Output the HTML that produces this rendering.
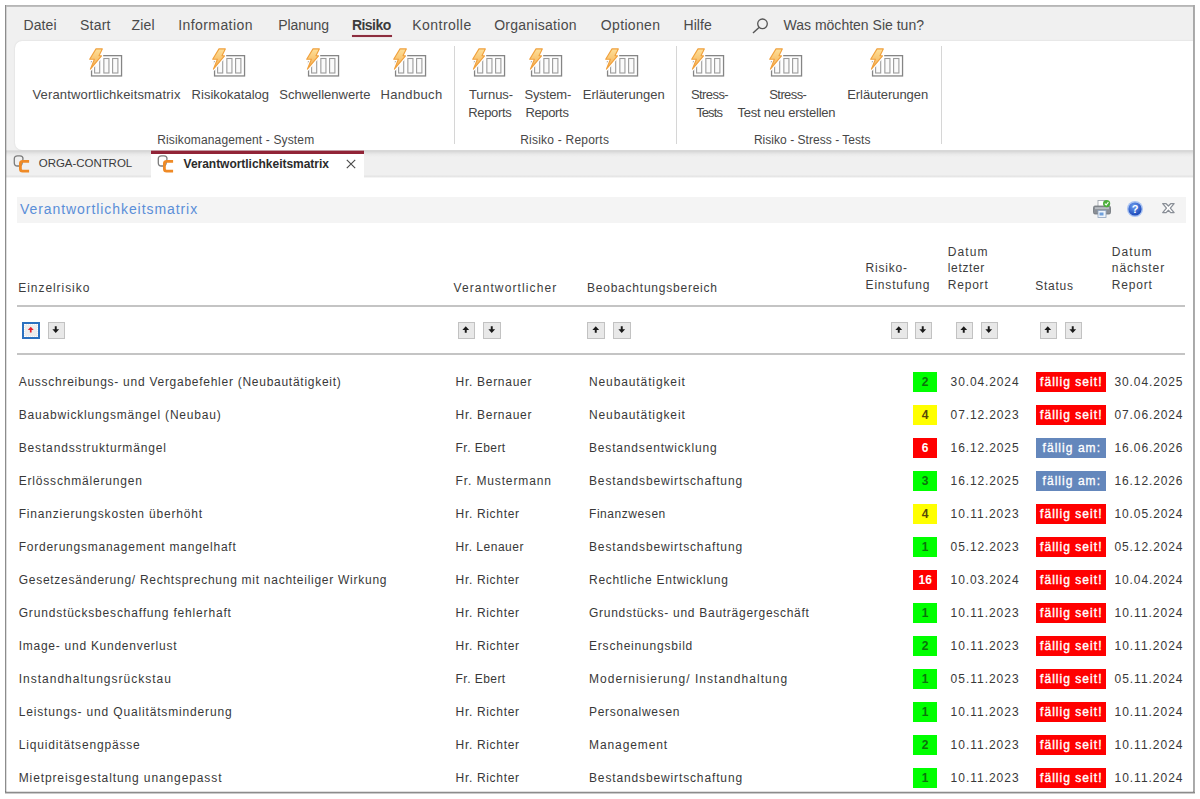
<!DOCTYPE html>
<html lang="de">
<head>
<meta charset="utf-8">
<title>Verantwortlichkeitsmatrix</title>
<style>
*{box-sizing:border-box;margin:0;padding:0}
html,body{width:1200px;height:799px;overflow:hidden;background:#fff}
body{font-family:"Liberation Sans",sans-serif;color:#3a3a3a;position:relative}
.abs{position:absolute;white-space:nowrap}
#frame{position:absolute;left:5px;top:5px;width:1190px;height:789px;background:#fff;overflow:hidden}
#win{position:absolute;left:-5px;top:-5px;width:1200px;height:799px}
.fb{position:absolute}
/* menu */
#menubar{position:absolute;left:0;top:0;width:1200px;height:151px;background:#f0f0f0}
.mi{position:absolute;top:16px;font-size:14px;line-height:18px;color:#4a4a4a;white-space:nowrap}
/* ribbon */
#ribbon{position:absolute;left:15px;top:40.5px;width:1200px;height:109.5px;background:#fff;border-radius:7px 0 0 7px;box-shadow:0 0 2px rgba(0,0,0,.12)}
.rl{position:absolute;font-size:13px;line-height:18px;color:#474747;white-space:nowrap}
.gl{position:absolute;top:132px;font-size:12px;line-height:16px;color:#474747;white-space:nowrap}
.sep{position:absolute;top:46px;width:1px;height:98px;background:#d6d6d6}
.ico{position:absolute;top:47px;width:36px;height:31px}
/* tabs */
#tabstrip{position:absolute;left:0;top:150px;width:1200px;height:27.5px;background:linear-gradient(to bottom,#e2e2e2 0,#d9d9d9 1.5px,#e2e2e2 3px,#eaeaea 4.5px,#f0f0f0 7px,#f0f0f0 24.8px,#e3e3e3 26.3px,#f4f4f4 27.5px)}
#tab2{position:absolute;left:151px;top:151px;width:213px;height:27px;background:#fff;border-top:3px solid #912437;box-shadow:0 -1px 0 rgba(160,60,80,.4)}
.tt{position:absolute;font-size:11.5px;line-height:16px;white-space:nowrap;color:#3b3b3b}
/* content */
#titlebar{position:absolute;left:17px;top:196.6px;width:1169px;height:26.2px;background:#f4f4f4}
#title{position:absolute;left:20px;top:200px;font-size:14px;line-height:18px;color:#5a8ed8;letter-spacing:.93px;white-space:nowrap}
.hr{position:absolute;left:16.5px;width:1168.5px;height:2px;background:#c4c4c4}
.th{position:absolute;font-size:12px;line-height:16.5px;letter-spacing:.75px;color:#3c3c3c;white-space:nowrap}
.sb{position:absolute;top:322px;width:17.7px;height:17.4px;background:#e8e8e8;border:1px solid #c2c2c2}
.sb svg{position:absolute;left:-.4px;top:-.6px}
.sb.act{border:2px solid #2b72c0;background:#ececec}
.td{position:absolute;font-size:12px;line-height:16px;letter-spacing:.75px;color:#383838;white-space:nowrap}
.bd{position:absolute;left:913px;width:24.4px;height:20px;font-size:12px;line-height:20px;text-align:center;font-weight:bold}
.st{position:absolute;left:1036.3px;width:70px;height:20px;font-size:12px;line-height:20px;text-align:center;color:#fff;white-space:nowrap}
</style>
</head>
<body>
<div id="frame"><div id="win">
<div id="menubar"></div>
<div class="mi" style="left:23.5px;letter-spacing:0.078px;">Datei</div>
<div class="mi" style="left:80.0px;letter-spacing:0.23px;">Start</div>
<div class="mi" style="left:131.5px;letter-spacing:0.146px;">Ziel</div>
<div class="mi" style="left:178.2px;letter-spacing:0.425px;">Information</div>
<div class="mi" style="left:278.2px;letter-spacing:-0.098px;">Planung</div>
<div class="mi" style="left:352.0px;letter-spacing:-0.563px;font-weight:bold;color:#3c3c3c;">Risiko</div>
<div class="mi" style="left:412.3px;letter-spacing:0.454px;">Kontrolle</div>
<div class="mi" style="left:494.2px;letter-spacing:0.264px;">Organisation</div>
<div class="mi" style="left:600.8px;letter-spacing:0.339px;">Optionen</div>
<div class="mi" style="left:683.5px;letter-spacing:0.046px;">Hilfe</div>
<div class="mi" style="left:783.5px;letter-spacing:0.009px;">Was möchten Sie tun?</div>
<div class="abs" style="left:352px;top:35px;width:40px;height:2px;background:#8c2d3e;box-shadow:0 0 1px rgba(220,120,130,.8)"></div>
<svg class="abs" style="left:751px;top:17px" width="19" height="17" viewBox="0 0 19 17"><circle cx="11.5" cy="6.8" r="4.8" fill="none" stroke="#555" stroke-width="1.3"/><path d="M8 10.4 L2 16" stroke="#555" stroke-width="1.4" fill="none"/></svg>
<div id="tabstrip"></div>
<div id="ribbon"></div>
<svg width="0" height="0" style="position:absolute"><defs><linearGradient id="bg" x1="0" y1="0" x2="0" y2="1"><stop offset="0" stop-color="#fde09a"/><stop offset="1" stop-color="#f5ab4c"/></linearGradient></defs></svg>
<svg class="ico" style="left:87.5px" width="36" height="31" viewBox="0 0 36 31"><rect x="3.55" y="8.65" width="30" height="20.3" fill="#fff" stroke="#858585" stroke-width="1.3"/><rect x="6.6" y="11.5" width="5.1" height="14.5" fill="#fbfbfb" stroke="#9c9c9c" stroke-width="1.1"/><rect x="15.85" y="11.5" width="5.1" height="14.5" fill="#fbfbfb" stroke="#9c9c9c" stroke-width="1.1"/><rect x="24.6" y="11.5" width="5.3" height="14.5" fill="#fbfbfb" stroke="#9c9c9c" stroke-width="1.1"/><path d="M8 1.9 L14.3 1.9 L11 8.8 L13.5 8.9 L2.4 22.2 L6.4 12.3 L1.7 12.3 Z" fill="#fff" stroke="#fff" stroke-width="3.6" stroke-linejoin="round"/><path d="M8 1.9 L14.3 1.9 L11 8.8 L13.5 8.9 L2.4 22.2 L6.4 12.3 L1.7 12.3 Z" fill="url(#bg)" stroke="#f0a03c" stroke-width="1.1" stroke-linejoin="round"/></svg>
<svg class="ico" style="left:210.6px" width="36" height="31" viewBox="0 0 36 31"><rect x="3.55" y="8.65" width="30" height="20.3" fill="#fff" stroke="#858585" stroke-width="1.3"/><rect x="6.6" y="11.5" width="5.1" height="14.5" fill="#fbfbfb" stroke="#9c9c9c" stroke-width="1.1"/><rect x="15.85" y="11.5" width="5.1" height="14.5" fill="#fbfbfb" stroke="#9c9c9c" stroke-width="1.1"/><rect x="24.6" y="11.5" width="5.3" height="14.5" fill="#fbfbfb" stroke="#9c9c9c" stroke-width="1.1"/><path d="M8 1.9 L14.3 1.9 L11 8.8 L13.5 8.9 L2.4 22.2 L6.4 12.3 L1.7 12.3 Z" fill="#fff" stroke="#fff" stroke-width="3.6" stroke-linejoin="round"/><path d="M8 1.9 L14.3 1.9 L11 8.8 L13.5 8.9 L2.4 22.2 L6.4 12.3 L1.7 12.3 Z" fill="url(#bg)" stroke="#f0a03c" stroke-width="1.1" stroke-linejoin="round"/></svg>
<svg class="ico" style="left:305.2px" width="36" height="31" viewBox="0 0 36 31"><rect x="3.55" y="8.65" width="30" height="20.3" fill="#fff" stroke="#858585" stroke-width="1.3"/><rect x="6.6" y="11.5" width="5.1" height="14.5" fill="#fbfbfb" stroke="#9c9c9c" stroke-width="1.1"/><rect x="15.85" y="11.5" width="5.1" height="14.5" fill="#fbfbfb" stroke="#9c9c9c" stroke-width="1.1"/><rect x="24.6" y="11.5" width="5.3" height="14.5" fill="#fbfbfb" stroke="#9c9c9c" stroke-width="1.1"/><path d="M8 1.9 L14.3 1.9 L11 8.8 L13.5 8.9 L2.4 22.2 L6.4 12.3 L1.7 12.3 Z" fill="#fff" stroke="#fff" stroke-width="3.6" stroke-linejoin="round"/><path d="M8 1.9 L14.3 1.9 L11 8.8 L13.5 8.9 L2.4 22.2 L6.4 12.3 L1.7 12.3 Z" fill="url(#bg)" stroke="#f0a03c" stroke-width="1.1" stroke-linejoin="round"/></svg>
<svg class="ico" style="left:391.8px" width="36" height="31" viewBox="0 0 36 31"><rect x="3.55" y="8.65" width="30" height="20.3" fill="#fff" stroke="#858585" stroke-width="1.3"/><rect x="6.6" y="11.5" width="5.1" height="14.5" fill="#fbfbfb" stroke="#9c9c9c" stroke-width="1.1"/><rect x="15.85" y="11.5" width="5.1" height="14.5" fill="#fbfbfb" stroke="#9c9c9c" stroke-width="1.1"/><rect x="24.6" y="11.5" width="5.3" height="14.5" fill="#fbfbfb" stroke="#9c9c9c" stroke-width="1.1"/><path d="M8 1.9 L14.3 1.9 L11 8.8 L13.5 8.9 L2.4 22.2 L6.4 12.3 L1.7 12.3 Z" fill="#fff" stroke="#fff" stroke-width="3.6" stroke-linejoin="round"/><path d="M8 1.9 L14.3 1.9 L11 8.8 L13.5 8.9 L2.4 22.2 L6.4 12.3 L1.7 12.3 Z" fill="url(#bg)" stroke="#f0a03c" stroke-width="1.1" stroke-linejoin="round"/></svg>
<svg class="ico" style="left:471px" width="36" height="31" viewBox="0 0 36 31"><rect x="3.55" y="8.65" width="30" height="20.3" fill="#fff" stroke="#858585" stroke-width="1.3"/><rect x="6.6" y="11.5" width="5.1" height="14.5" fill="#fbfbfb" stroke="#9c9c9c" stroke-width="1.1"/><rect x="15.85" y="11.5" width="5.1" height="14.5" fill="#fbfbfb" stroke="#9c9c9c" stroke-width="1.1"/><rect x="24.6" y="11.5" width="5.3" height="14.5" fill="#fbfbfb" stroke="#9c9c9c" stroke-width="1.1"/><path d="M8 1.9 L14.3 1.9 L11 8.8 L13.5 8.9 L2.4 22.2 L6.4 12.3 L1.7 12.3 Z" fill="#fff" stroke="#fff" stroke-width="3.6" stroke-linejoin="round"/><path d="M8 1.9 L14.3 1.9 L11 8.8 L13.5 8.9 L2.4 22.2 L6.4 12.3 L1.7 12.3 Z" fill="url(#bg)" stroke="#f0a03c" stroke-width="1.1" stroke-linejoin="round"/></svg>
<svg class="ico" style="left:528.3px" width="36" height="31" viewBox="0 0 36 31"><rect x="3.55" y="8.65" width="30" height="20.3" fill="#fff" stroke="#858585" stroke-width="1.3"/><rect x="6.6" y="11.5" width="5.1" height="14.5" fill="#fbfbfb" stroke="#9c9c9c" stroke-width="1.1"/><rect x="15.85" y="11.5" width="5.1" height="14.5" fill="#fbfbfb" stroke="#9c9c9c" stroke-width="1.1"/><rect x="24.6" y="11.5" width="5.3" height="14.5" fill="#fbfbfb" stroke="#9c9c9c" stroke-width="1.1"/><path d="M8 1.9 L14.3 1.9 L11 8.8 L13.5 8.9 L2.4 22.2 L6.4 12.3 L1.7 12.3 Z" fill="#fff" stroke="#fff" stroke-width="3.6" stroke-linejoin="round"/><path d="M8 1.9 L14.3 1.9 L11 8.8 L13.5 8.9 L2.4 22.2 L6.4 12.3 L1.7 12.3 Z" fill="url(#bg)" stroke="#f0a03c" stroke-width="1.1" stroke-linejoin="round"/></svg>
<svg class="ico" style="left:604px" width="36" height="31" viewBox="0 0 36 31"><rect x="3.55" y="8.65" width="30" height="20.3" fill="#fff" stroke="#858585" stroke-width="1.3"/><rect x="6.6" y="11.5" width="5.1" height="14.5" fill="#fbfbfb" stroke="#9c9c9c" stroke-width="1.1"/><rect x="15.85" y="11.5" width="5.1" height="14.5" fill="#fbfbfb" stroke="#9c9c9c" stroke-width="1.1"/><rect x="24.6" y="11.5" width="5.3" height="14.5" fill="#fbfbfb" stroke="#9c9c9c" stroke-width="1.1"/><path d="M8 1.9 L14.3 1.9 L11 8.8 L13.5 8.9 L2.4 22.2 L6.4 12.3 L1.7 12.3 Z" fill="#fff" stroke="#fff" stroke-width="3.6" stroke-linejoin="round"/><path d="M8 1.9 L14.3 1.9 L11 8.8 L13.5 8.9 L2.4 22.2 L6.4 12.3 L1.7 12.3 Z" fill="url(#bg)" stroke="#f0a03c" stroke-width="1.1" stroke-linejoin="round"/></svg>
<svg class="ico" style="left:690px" width="36" height="31" viewBox="0 0 36 31"><rect x="3.55" y="8.65" width="30" height="20.3" fill="#fff" stroke="#858585" stroke-width="1.3"/><rect x="6.6" y="11.5" width="5.1" height="14.5" fill="#fbfbfb" stroke="#9c9c9c" stroke-width="1.1"/><rect x="15.85" y="11.5" width="5.1" height="14.5" fill="#fbfbfb" stroke="#9c9c9c" stroke-width="1.1"/><rect x="24.6" y="11.5" width="5.3" height="14.5" fill="#fbfbfb" stroke="#9c9c9c" stroke-width="1.1"/><path d="M8 1.9 L14.3 1.9 L11 8.8 L13.5 8.9 L2.4 22.2 L6.4 12.3 L1.7 12.3 Z" fill="#fff" stroke="#fff" stroke-width="3.6" stroke-linejoin="round"/><path d="M8 1.9 L14.3 1.9 L11 8.8 L13.5 8.9 L2.4 22.2 L6.4 12.3 L1.7 12.3 Z" fill="url(#bg)" stroke="#f0a03c" stroke-width="1.1" stroke-linejoin="round"/></svg>
<svg class="ico" style="left:768px" width="36" height="31" viewBox="0 0 36 31"><rect x="3.55" y="8.65" width="30" height="20.3" fill="#fff" stroke="#858585" stroke-width="1.3"/><rect x="6.6" y="11.5" width="5.1" height="14.5" fill="#fbfbfb" stroke="#9c9c9c" stroke-width="1.1"/><rect x="15.85" y="11.5" width="5.1" height="14.5" fill="#fbfbfb" stroke="#9c9c9c" stroke-width="1.1"/><rect x="24.6" y="11.5" width="5.3" height="14.5" fill="#fbfbfb" stroke="#9c9c9c" stroke-width="1.1"/><path d="M8 1.9 L14.3 1.9 L11 8.8 L13.5 8.9 L2.4 22.2 L6.4 12.3 L1.7 12.3 Z" fill="#fff" stroke="#fff" stroke-width="3.6" stroke-linejoin="round"/><path d="M8 1.9 L14.3 1.9 L11 8.8 L13.5 8.9 L2.4 22.2 L6.4 12.3 L1.7 12.3 Z" fill="url(#bg)" stroke="#f0a03c" stroke-width="1.1" stroke-linejoin="round"/></svg>
<svg class="ico" style="left:868.5px" width="36" height="31" viewBox="0 0 36 31"><rect x="3.55" y="8.65" width="30" height="20.3" fill="#fff" stroke="#858585" stroke-width="1.3"/><rect x="6.6" y="11.5" width="5.1" height="14.5" fill="#fbfbfb" stroke="#9c9c9c" stroke-width="1.1"/><rect x="15.85" y="11.5" width="5.1" height="14.5" fill="#fbfbfb" stroke="#9c9c9c" stroke-width="1.1"/><rect x="24.6" y="11.5" width="5.3" height="14.5" fill="#fbfbfb" stroke="#9c9c9c" stroke-width="1.1"/><path d="M8 1.9 L14.3 1.9 L11 8.8 L13.5 8.9 L2.4 22.2 L6.4 12.3 L1.7 12.3 Z" fill="#fff" stroke="#fff" stroke-width="3.6" stroke-linejoin="round"/><path d="M8 1.9 L14.3 1.9 L11 8.8 L13.5 8.9 L2.4 22.2 L6.4 12.3 L1.7 12.3 Z" fill="url(#bg)" stroke="#f0a03c" stroke-width="1.1" stroke-linejoin="round"/></svg>
<div class="rl" style="left:32.4px;top:86.4px;letter-spacing:0.176px">Verantwortlichkeitsmatrix</div>
<div class="rl" style="left:191.6px;top:86.4px;letter-spacing:0.014px">Risikokatalog</div>
<div class="rl" style="left:279.3px;top:86.4px;letter-spacing:0.004px">Schwellenwerte</div>
<div class="rl" style="left:380.4px;top:86.4px;letter-spacing:0.36px">Handbuch</div>
<div class="rl" style="left:468.9px;top:86.4px;letter-spacing:-0.002px">Turnus-</div>
<div class="rl" style="left:468.2px;top:104.4px;letter-spacing:-0.339px">Reports</div>
<div class="rl" style="left:524.4px;top:86.4px;letter-spacing:-0.112px">System-</div>
<div class="rl" style="left:525.4px;top:104.4px;letter-spacing:-0.339px">Reports</div>
<div class="rl" style="left:582.8px;top:86.4px;letter-spacing:0.019px">Erläuterungen</div>
<div class="rl" style="left:690.9px;top:86.4px;letter-spacing:-0.562px">Stress-</div>
<div class="rl" style="left:696.2px;top:104.4px;letter-spacing:-0.911px">Tests</div>
<div class="rl" style="left:769.3px;top:86.4px;letter-spacing:-0.595px">Stress-</div>
<div class="rl" style="left:737.4px;top:104.4px;letter-spacing:-0.218px">Test neu erstellen</div>
<div class="rl" style="left:847.2px;top:86.4px;letter-spacing:-0.056px">Erläuterungen</div>
<div class="gl" style="left:157.2px;letter-spacing:0.15px">Risikomanagement - System</div>
<div class="gl" style="left:520.2px;letter-spacing:0.223px">Risiko - Reports</div>
<div class="gl" style="left:753.9px;letter-spacing:0.036px">Risiko - Stress - Tests</div>
<div class="sep" style="left:453.5px"></div>
<div class="sep" style="left:675.8px"></div>
<div class="sep" style="left:940.5px"></div>
<div id="tab2"></div>
<svg class="abs" style="left:13.25px;top:154px" width="18" height="20" viewBox="0 0 18 20"><path d="M4.6 1.8 L7 1.8 Q10 1.8 10 4.8 L9.2 9 Q8.8 12 6.4 12 L4.4 12 Q1.3 12 1.3 9 L1.3 4.8 Q1.3 1.8 4.6 1.8 Z" fill="none" stroke="#7c7c7c" stroke-width="1.3"/><path d="M16.1 7.4 L9.6 7.4 Q7.4 7.4 7.4 9.6 L7.4 15 Q7.4 17.2 9.6 17.2 L16.1 17.2" fill="none" stroke="#ef8a26" stroke-width="2.8"/></svg>
<svg class="abs" style="left:157px;top:154px" width="18" height="20" viewBox="0 0 18 20"><path d="M4.6 1.8 L7 1.8 Q10 1.8 10 4.8 L9.2 9 Q8.8 12 6.4 12 L4.4 12 Q1.3 12 1.3 9 L1.3 4.8 Q1.3 1.8 4.6 1.8 Z" fill="none" stroke="#7c7c7c" stroke-width="1.3"/><path d="M16.1 7.4 L9.6 7.4 Q7.4 7.4 7.4 9.6 L7.4 15 Q7.4 17.2 9.6 17.2 L16.1 17.2" fill="none" stroke="#ef8a26" stroke-width="2.8"/></svg>
<div class="tt" style="left:38.8px;top:154.8px;letter-spacing:-.05px">ORGA-CONTROL</div>
<div class="tt" style="left:183.6px;top:156.3px;font-weight:bold;color:#2b2b2b;font-size:12px;letter-spacing:-.03px">Verantwortlichkeitsmatrix</div>
<svg class="abs" style="left:345.5px;top:159px" width="10" height="10" viewBox="0 0 10 10"><path d="M0.8 0.8 L9.2 9.2 M9.2 0.8 L0.8 9.2" stroke="#4a4a4a" stroke-width="1.15" fill="none"/></svg>
<div id="titlebar"></div>
<div id="title">Verantwortlichkeitsmatrix</div>
<svg class="abs" style="left:1092px;top:199px" width="20" height="20" viewBox="0 0 20 20"><rect x="6" y="1.5" width="8" height="7" fill="#fff" stroke="#9aa0a8" stroke-width=".8"/><rect x="1.5" y="7" width="17" height="8" rx="1.5" fill="#8a8f96" stroke="#6e737a" stroke-width=".8"/><rect x="3" y="8.2" width="14" height="2" fill="#b9bdc3"/><rect x="6" y="11.5" width="8" height="7" fill="#eef4fb" stroke="#8ea4bf" stroke-width=".8"/><rect x="7.5" y="13.5" width="4" height="3" fill="#6fa0dc"/><circle cx="14.6" cy="4.6" r="3.6" fill="#4caf3a"/><path d="M12.8 4.6 L14.2 6 L16.4 3.2" stroke="#fff" stroke-width="1.1" fill="none"/></svg>
<svg class="abs" style="left:1126.2px;top:199.5px" width="18" height="18" viewBox="0 0 18 18"><defs><radialGradient id="hg" cx="40%" cy="30%" r="70%"><stop offset="0" stop-color="#6d9df0"/><stop offset="1" stop-color="#1b48b8"/></radialGradient></defs><circle cx="9" cy="9" r="8" fill="#a9c3f2"/><circle cx="9" cy="9" r="6.6" fill="url(#hg)"/><text x="9" y="13" text-anchor="middle" font-family="Liberation Sans" font-weight="bold" font-size="11" fill="#fff">?</text></svg>
<svg class="abs" style="left:1162px;top:203px" width="13" height="11" viewBox="0 0 13 11"><path d="M0.7 0.7 L4.1 0.7 L6.4 3 L8.7 0.7 L12.1 0.7 L8.3 5.1 L12.1 9.6 L8.7 9.6 L6.4 7.3 L4.1 9.6 L0.7 9.6 L4.5 5.1 Z" fill="#fff" stroke="#8a8f97" stroke-width="1.3" stroke-linejoin="round"/></svg>
<div class="hr" style="top:305px"></div>
<div class="hr" style="top:353px"></div>
<div class="th" style="left:18.30px;top:279.90px;letter-spacing:0.938px;">Einzelrisiko</div>
<div class="th" style="left:453.50px;top:279.90px;letter-spacing:1.11px;">Verantwortlicher</div>
<div class="th" style="left:587.00px;top:279.90px;letter-spacing:0.773px;">Beobachtungsbereich</div>
<div class="th" style="left:865.60px;top:260.00px;letter-spacing:0.788px;">Risiko-</div>
<div class="th" style="left:865.60px;top:276.50px;letter-spacing:0.798px;">Einstufung</div>
<div class="th" style="left:947.75px;top:243.50px;letter-spacing:1.114px;">Datum</div>
<div class="th" style="left:947.75px;top:260.00px;letter-spacing:0.652px;">letzter</div>
<div class="th" style="left:947.75px;top:276.50px;letter-spacing:0.794px;">Report</div>
<div class="th" style="left:1035.30px;top:277.90px;letter-spacing:0.734px;">Status</div>
<div class="th" style="left:1111.80px;top:243.50px;letter-spacing:1.089px;">Datum</div>
<div class="th" style="left:1111.80px;top:260.00px;letter-spacing:0.91px;">nächster</div>
<div class="th" style="left:1111.80px;top:276.50px;letter-spacing:0.794px;">Report</div>
<div class="sb act" style="left:22px"><div style="position:absolute;left:0;top:0;right:0;bottom:0;border:1px dotted #fff"></div><svg width="13.5" height="13.5" viewBox="0 0 16 16"><path d="M8 4.3 L11.5 8.3 L9 8.3 L9 11.2 L7 11.2 L7 8.3 L4.5 8.3 Z" fill="#e8202a"/></svg></div>
<div class="sb" style="left:47.7px"><svg width="15.5" height="15.5" viewBox="0 0 16 16"><path d="M8 11.4 L11.5 7.4 L9 7.4 L9 4.5 L7 4.5 L7 7.4 L4.5 7.4 Z" fill="#1a1a1a"/></svg></div>
<div class="sb" style="left:457.6px"><svg width="15.5" height="15.5" viewBox="0 0 16 16"><path d="M8 4.3 L11.5 8.3 L9 8.3 L9 11.2 L7 11.2 L7 8.3 L4.5 8.3 Z" fill="#1a1a1a"/></svg></div>
<div class="sb" style="left:483.3px"><svg width="15.5" height="15.5" viewBox="0 0 16 16"><path d="M8 11.4 L11.5 7.4 L9 7.4 L9 4.5 L7 4.5 L7 7.4 L4.5 7.4 Z" fill="#1a1a1a"/></svg></div>
<div class="sb" style="left:587.4px"><svg width="15.5" height="15.5" viewBox="0 0 16 16"><path d="M8 4.3 L11.5 8.3 L9 8.3 L9 11.2 L7 11.2 L7 8.3 L4.5 8.3 Z" fill="#1a1a1a"/></svg></div>
<div class="sb" style="left:612.9px"><svg width="15.5" height="15.5" viewBox="0 0 16 16"><path d="M8 11.4 L11.5 7.4 L9 7.4 L9 4.5 L7 4.5 L7 7.4 L4.5 7.4 Z" fill="#1a1a1a"/></svg></div>
<div class="sb" style="left:890.8px"><svg width="15.5" height="15.5" viewBox="0 0 16 16"><path d="M8 4.3 L11.5 8.3 L9 8.3 L9 11.2 L7 11.2 L7 8.3 L4.5 8.3 Z" fill="#1a1a1a"/></svg></div>
<div class="sb" style="left:914.8px"><svg width="15.5" height="15.5" viewBox="0 0 16 16"><path d="M8 11.4 L11.5 7.4 L9 7.4 L9 4.5 L7 4.5 L7 7.4 L4.5 7.4 Z" fill="#1a1a1a"/></svg></div>
<div class="sb" style="left:955.6px"><svg width="15.5" height="15.5" viewBox="0 0 16 16"><path d="M8 4.3 L11.5 8.3 L9 8.3 L9 11.2 L7 11.2 L7 8.3 L4.5 8.3 Z" fill="#1a1a1a"/></svg></div>
<div class="sb" style="left:980.8px"><svg width="15.5" height="15.5" viewBox="0 0 16 16"><path d="M8 11.4 L11.5 7.4 L9 7.4 L9 4.5 L7 4.5 L7 7.4 L4.5 7.4 Z" fill="#1a1a1a"/></svg></div>
<div class="sb" style="left:1039.6px"><svg width="15.5" height="15.5" viewBox="0 0 16 16"><path d="M8 4.3 L11.5 8.3 L9 8.3 L9 11.2 L7 11.2 L7 8.3 L4.5 8.3 Z" fill="#1a1a1a"/></svg></div>
<div class="sb" style="left:1064.6px"><svg width="15.5" height="15.5" viewBox="0 0 16 16"><path d="M8 11.4 L11.5 7.4 L9 7.4 L9 4.5 L7 4.5 L7 7.4 L4.5 7.4 Z" fill="#1a1a1a"/></svg></div>
<div class="td" style="left:18.7px;top:373.8px;letter-spacing:0.732px">Ausschreibungs- und Vergabefehler (Neubautätigkeit)</div>
<div class="td" style="left:455.6px;top:373.8px;letter-spacing:0.705px">Hr. Bernauer</div>
<div class="td" style="left:589.0px;top:373.8px;letter-spacing:0.886px">Neubautätigkeit</div>
<div class="bd" style="top:372px;background:#00ff00;color:#0c720c">2</div>
<div class="td" style="left:950.6px;top:373.8px;letter-spacing:0.882px">30.04.2024</div>
<div class="st" style="top:372px;background:#ff0000;-webkit-text-stroke:.4px #fff;letter-spacing:1.034px">fällig seit!</div>
<div class="td" style="left:1114.5px;top:373.8px;letter-spacing:0.882px">30.04.2025</div>
<div class="td" style="left:18.7px;top:406.8px;letter-spacing:0.809px">Bauabwicklungsmängel (Neubau)</div>
<div class="td" style="left:455.6px;top:406.8px;letter-spacing:0.705px">Hr. Bernauer</div>
<div class="td" style="left:589.0px;top:406.8px;letter-spacing:0.886px">Neubautätigkeit</div>
<div class="bd" style="top:405px;background:#ffff00;color:#574909">4</div>
<div class="td" style="left:950.6px;top:406.8px;letter-spacing:0.882px">07.12.2023</div>
<div class="st" style="top:405px;background:#ff0000;-webkit-text-stroke:.4px #fff;letter-spacing:1.034px">fällig seit!</div>
<div class="td" style="left:1114.5px;top:406.8px;letter-spacing:0.882px">07.06.2024</div>
<div class="td" style="left:18.7px;top:439.8px;letter-spacing:0.852px">Bestandsstrukturmängel</div>
<div class="td" style="left:455.6px;top:439.8px;letter-spacing:0.448px">Fr. Ebert</div>
<div class="td" style="left:589.0px;top:439.8px;letter-spacing:0.826px">Bestandsentwicklung</div>
<div class="bd" style="top:438px;background:#ff0000;color:#ffffff">6</div>
<div class="td" style="left:950.6px;top:439.8px;letter-spacing:0.882px">16.12.2025</div>
<div class="st" style="top:438px;background:#6487bc;-webkit-text-stroke:.3px #fff;padding-left:1px;letter-spacing:1.041px">fällig am:</div>
<div class="td" style="left:1114.5px;top:439.8px;letter-spacing:0.882px">16.06.2026</div>
<div class="td" style="left:18.7px;top:472.8px;letter-spacing:0.818px">Erlösschmälerungen</div>
<div class="td" style="left:455.6px;top:472.8px;letter-spacing:0.867px">Fr. Mustermann</div>
<div class="td" style="left:589.0px;top:472.8px;letter-spacing:0.864px">Bestandsbewirtschaftung</div>
<div class="bd" style="top:471px;background:#00ff00;color:#0c720c">3</div>
<div class="td" style="left:950.6px;top:472.8px;letter-spacing:0.882px">16.12.2025</div>
<div class="st" style="top:471px;background:#6487bc;-webkit-text-stroke:.3px #fff;padding-left:1px;letter-spacing:1.041px">fällig am:</div>
<div class="td" style="left:1114.5px;top:472.8px;letter-spacing:0.882px">16.12.2026</div>
<div class="td" style="left:18.7px;top:505.8px;letter-spacing:0.81px">Finanzierungskosten überhöht</div>
<div class="td" style="left:455.6px;top:505.8px;letter-spacing:0.671px">Hr. Richter</div>
<div class="td" style="left:589.0px;top:505.8px;letter-spacing:0.558px">Finanzwesen</div>
<div class="bd" style="top:504px;background:#ffff00;color:#574909">4</div>
<div class="td" style="left:950.6px;top:505.8px;letter-spacing:0.981px">10.11.2023</div>
<div class="st" style="top:504px;background:#ff0000;-webkit-text-stroke:.4px #fff;letter-spacing:1.034px">fällig seit!</div>
<div class="td" style="left:1114.5px;top:505.8px;letter-spacing:0.882px">10.05.2024</div>
<div class="td" style="left:18.7px;top:538.8px;letter-spacing:0.766px">Forderungsmanagement mangelhaft</div>
<div class="td" style="left:455.6px;top:538.8px;letter-spacing:0.518px">Hr. Lenauer</div>
<div class="td" style="left:589.0px;top:538.8px;letter-spacing:0.864px">Bestandsbewirtschaftung</div>
<div class="bd" style="top:537px;background:#00ff00;color:#0c720c">1</div>
<div class="td" style="left:950.6px;top:538.8px;letter-spacing:0.882px">05.12.2023</div>
<div class="st" style="top:537px;background:#ff0000;-webkit-text-stroke:.4px #fff;letter-spacing:1.034px">fällig seit!</div>
<div class="td" style="left:1114.5px;top:538.8px;letter-spacing:0.882px">05.12.2024</div>
<div class="td" style="left:18.7px;top:571.8px;letter-spacing:0.731px">Gesetzesänderung/ Rechtsprechung mit nachteiliger Wirkung</div>
<div class="td" style="left:455.6px;top:571.8px;letter-spacing:0.671px">Hr. Richter</div>
<div class="td" style="left:589.0px;top:571.8px;letter-spacing:0.738px">Rechtliche Entwicklung</div>
<div class="bd" style="top:570px;background:#ff0000;color:#ffffff">16</div>
<div class="td" style="left:950.6px;top:571.8px;letter-spacing:0.882px">10.03.2024</div>
<div class="st" style="top:570px;background:#ff0000;-webkit-text-stroke:.4px #fff;letter-spacing:1.034px">fällig seit!</div>
<div class="td" style="left:1114.5px;top:571.8px;letter-spacing:0.882px">10.04.2024</div>
<div class="td" style="left:18.7px;top:604.8px;letter-spacing:0.822px">Grundstücksbeschaffung fehlerhaft</div>
<div class="td" style="left:455.6px;top:604.8px;letter-spacing:0.671px">Hr. Richter</div>
<div class="td" style="left:589.0px;top:604.8px;letter-spacing:0.721px">Grundstücks- und Bauträgergeschäft</div>
<div class="bd" style="top:603px;background:#00ff00;color:#0c720c">1</div>
<div class="td" style="left:950.6px;top:604.8px;letter-spacing:0.981px">10.11.2023</div>
<div class="st" style="top:603px;background:#ff0000;-webkit-text-stroke:.4px #fff;letter-spacing:1.034px">fällig seit!</div>
<div class="td" style="left:1114.5px;top:604.8px;letter-spacing:0.981px">10.11.2024</div>
<div class="td" style="left:18.7px;top:637.8px;letter-spacing:0.741px">Image- und Kundenverlust</div>
<div class="td" style="left:455.6px;top:637.8px;letter-spacing:0.671px">Hr. Richter</div>
<div class="td" style="left:589.0px;top:637.8px;letter-spacing:0.794px">Erscheinungsbild</div>
<div class="bd" style="top:636px;background:#00ff00;color:#0c720c">2</div>
<div class="td" style="left:950.6px;top:637.8px;letter-spacing:0.981px">10.11.2023</div>
<div class="st" style="top:636px;background:#ff0000;-webkit-text-stroke:.4px #fff;letter-spacing:1.034px">fällig seit!</div>
<div class="td" style="left:1114.5px;top:637.8px;letter-spacing:0.981px">10.11.2024</div>
<div class="td" style="left:18.7px;top:670.8px;letter-spacing:1.005px">Instandhaltungsrückstau</div>
<div class="td" style="left:455.6px;top:670.8px;letter-spacing:0.448px">Fr. Ebert</div>
<div class="td" style="left:589.0px;top:670.8px;letter-spacing:1.034px">Modernisierung/ Instandhaltung</div>
<div class="bd" style="top:669px;background:#00ff00;color:#0c720c">1</div>
<div class="td" style="left:950.6px;top:670.8px;letter-spacing:0.981px">05.11.2023</div>
<div class="st" style="top:669px;background:#ff0000;-webkit-text-stroke:.4px #fff;letter-spacing:1.034px">fällig seit!</div>
<div class="td" style="left:1114.5px;top:670.8px;letter-spacing:0.981px">05.11.2024</div>
<div class="td" style="left:18.7px;top:703.8px;letter-spacing:0.837px">Leistungs- und Qualitätsminderung</div>
<div class="td" style="left:455.6px;top:703.8px;letter-spacing:0.671px">Hr. Richter</div>
<div class="td" style="left:589.0px;top:703.8px;letter-spacing:0.703px">Personalwesen</div>
<div class="bd" style="top:702px;background:#00ff00;color:#0c720c">1</div>
<div class="td" style="left:950.6px;top:703.8px;letter-spacing:0.981px">10.11.2023</div>
<div class="st" style="top:702px;background:#ff0000;-webkit-text-stroke:.4px #fff;letter-spacing:1.034px">fällig seit!</div>
<div class="td" style="left:1114.5px;top:703.8px;letter-spacing:0.981px">10.11.2024</div>
<div class="td" style="left:18.7px;top:736.8px;letter-spacing:0.835px">Liquiditätsengpässe</div>
<div class="td" style="left:455.6px;top:736.8px;letter-spacing:0.671px">Hr. Richter</div>
<div class="td" style="left:589.0px;top:736.8px;letter-spacing:0.906px">Management</div>
<div class="bd" style="top:735px;background:#00ff00;color:#0c720c">2</div>
<div class="td" style="left:950.6px;top:736.8px;letter-spacing:0.981px">10.11.2023</div>
<div class="st" style="top:735px;background:#ff0000;-webkit-text-stroke:.4px #fff;letter-spacing:1.034px">fällig seit!</div>
<div class="td" style="left:1114.5px;top:736.8px;letter-spacing:0.981px">10.11.2024</div>
<div class="td" style="left:18.7px;top:769.8px;letter-spacing:0.889px">Mietpreisgestaltung unangepasst</div>
<div class="td" style="left:455.6px;top:769.8px;letter-spacing:0.671px">Hr. Richter</div>
<div class="td" style="left:589.0px;top:769.8px;letter-spacing:0.864px">Bestandsbewirtschaftung</div>
<div class="bd" style="top:768px;background:#00ff00;color:#0c720c">1</div>
<div class="td" style="left:950.6px;top:769.8px;letter-spacing:0.981px">10.11.2023</div>
<div class="st" style="top:768px;background:#ff0000;-webkit-text-stroke:.4px #fff;letter-spacing:1.034px">fällig seit!</div>
<div class="td" style="left:1114.5px;top:769.8px;letter-spacing:0.981px">10.11.2024</div>
<div class="fb" style="left:5px;top:5px;width:1190px;height:1px;background:#b6b6b6"></div>
<div class="fb" style="left:6px;top:6px;width:1188px;height:1px;background:#bebebe"></div>
<div class="fb" style="left:5px;top:5px;width:1px;height:788px;background:#8c8c8c"></div>
<div class="fb" style="left:6px;top:7px;width:1px;height:785px;background:rgba(0,0,0,.13)"></div>
<div class="fb" style="left:1193px;top:5px;width:1px;height:788px;background:#a8a8a8"></div>
<div class="fb" style="left:1194px;top:5px;width:1px;height:788px;background:#acacac"></div>
<div class="fb" style="left:5px;top:791px;width:1189px;height:1px;background:rgba(0,0,0,.12)"></div>
<div class="fb" style="left:5px;top:792px;width:1190px;height:1px;background:#8c8c8c"></div>
<div class="fb" style="left:5px;top:793px;width:1190px;height:1px;background:#cacaca"></div>
</div></div>
</body>
</html>
